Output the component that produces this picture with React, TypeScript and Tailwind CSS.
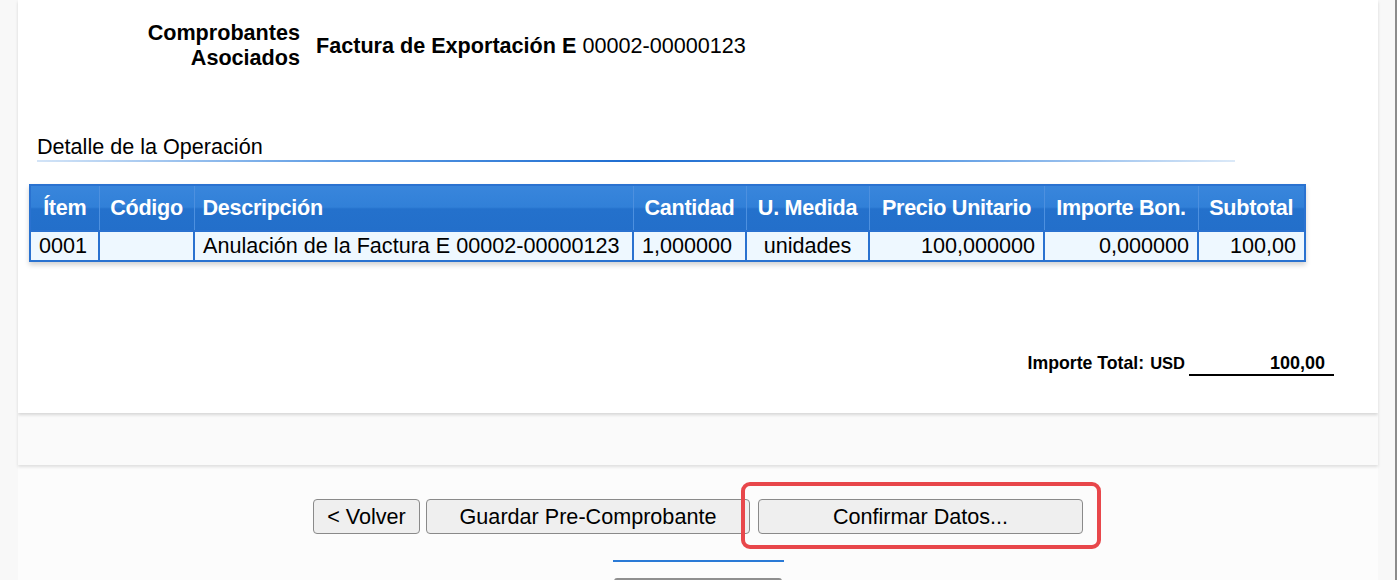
import React from 'react';

// Columns of the detail table (widths measured from the form)
const columns = [
  { label: 'Ítem', width: 'w-[69px]', head: 'text-center', cell: 'text-left', value: '0001' },
  { label: 'Código', width: 'w-[95px]', head: 'text-center', cell: 'text-left', value: '' },
  { label: 'Descripción', width: 'w-[439px]', head: 'text-left', cell: 'text-left', value: 'Anulación de la Factura E 00002-00000123' },
  { label: 'Cantidad', width: 'w-[113px]', head: 'text-center', cell: 'text-left', value: '1,000000' },
  { label: 'U. Medida', width: 'w-[123px]', head: 'text-center', cell: 'text-center', value: 'unidades' },
  { label: 'Precio Unitario', width: 'w-[175px]', head: 'text-center', cell: 'text-right', value: '100,000000' },
  { label: 'Importe Bon.', width: 'w-[154px]', head: 'text-center', cell: 'text-right', value: '0,000000' },
  { label: 'Subtotal', width: 'w-[107px]', head: 'text-center', cell: 'text-right', value: '100,00' },
];

const DetailTable = () => (
  <table className="ml-[11px] w-[1275px] table-fixed border-collapse border-2 border-[#2a72d0] shadow-[0_3px_5px_rgba(0,0,0,0.18)]">
    <thead>
      <tr className="h-[46px] bg-[linear-gradient(to_bottom,#3986dc_0%,#3180d8_48%,#2471cc_52%,#236fca_100%)]">
        {columns.map((col) => (
          <th
            key={col.label}
            className={`${col.width} ${col.head} border-x border-[#4d90df] px-[8px] font-bold whitespace-nowrap tracking-[-0.3px] text-white`}
          >
            {col.label}
          </th>
        ))}
      </tr>
    </thead>
    <tbody>
      <tr className="h-[30px] bg-[#eef8ff]">
        {columns.map((col) => (
          <td
            key={col.label}
            className={`${col.cell} border-2 border-[#2a72d0] px-[8px] leading-[26px] text-black whitespace-nowrap`}
          >
            {col.value}
          </td>
        ))}
      </tr>
    </tbody>
  </table>
);

const App = () => {
  return (
    <div className="flex h-[580px] w-[1400px] overflow-hidden bg-white font-['Liberation_Sans',Arial,sans-serif] text-[21.6px] text-black">
      <div className="flex w-[1395px] flex-col bg-[#f8f8f8]">
        {/* Main panel */}
        <div className="relative z-10 ml-[18px] h-[413px] w-[1360px] shrink-0 bg-white shadow-[0_2px_3px_rgba(0,0,0,0.14)]">
          <div className="flex items-center pt-[20px]">
            <div className="w-[282px] text-right font-bold leading-[25px]">
              Comprobantes
              <br />
              Asociados
            </div>
            <div className="pl-[16px] leading-[25px]">
              <span className="font-bold">Factura de Exportación E</span> 00002-00000123
            </div>
          </div>

          <div className="ml-[19px] mt-[64px] w-[1198px]">
            <div className="leading-[25px]">Detalle de la Operación</div>
            <div className="mt-[1px] h-[2px] bg-[linear-gradient(to_right,#d3e4f7_0%,#5e9ce4_25%,#1d6cd0_50%,#5e9ce4_75%,#dbe9f8_100%)]" />
          </div>

          <div className="mt-[22px]">
            <DetailTable />
          </div>

          <div className="mr-[44px] mt-[88px] flex items-baseline justify-end font-bold">
            <span className="text-[17.7px]">Importe Total:</span>
            <span className="ml-[6px] text-[16.5px]">USD</span>
            <span className="ml-[4px] w-[145px] border-b-2 border-black pr-[9px] text-right text-[18px] leading-[22px]">
              100,00
            </span>
          </div>
        </div>

        {/* Gray band */}
        <div className="relative z-[5] ml-[18px] h-[52px] w-[1360px] shrink-0 bg-[#fafafa] shadow-[0_2px_3px_rgba(0,0,0,0.12)]" />

        {/* Actions */}
        <div className="relative ml-[18px] flex w-[1360px] flex-1 flex-col items-center bg-[#fcfcfc] pt-[34px]">
          <div className="flex">
            <button className="h-[35px] w-[107px] rounded-[4px] border border-[#8a8a8a] bg-[#efefef] text-[21.6px] leading-none">
              &lt; Volver
            </button>
            <button className="ml-[6px] h-[35px] w-[324px] rounded-[4px] border border-[#8a8a8a] bg-[#efefef] text-[21.6px] leading-none">
              Guardar Pre-Comprobante
            </button>
            <button className="ml-[8px] h-[35px] w-[325px] rounded-[4px] border border-[#8a8a8a] bg-[#efefef] text-[21.6px] leading-none">
              Confirmar Datos...
            </button>
          </div>

          <div className="mt-[26px] h-[2px] w-[171px] shrink-0 bg-[#2a7ad6]" />
          <div className="mt-[16px] h-[10px] w-[168px] shrink-0 rounded-t-[3px] border-x border-t-2 border-[#8f8f8f] bg-[#efefef]" />

          {/* Highlight annotation */}
          <div className="pointer-events-none absolute left-[723px] top-[17px] h-[67px] w-[360px] rounded-[9px] border-4 border-[#e8474b]" />
        </div>
      </div>
      <div className="h-full w-[2px] bg-[#8c8c8c]" />
      <div className="h-full flex-1 bg-white" />
    </div>
  );
};

export default App;
